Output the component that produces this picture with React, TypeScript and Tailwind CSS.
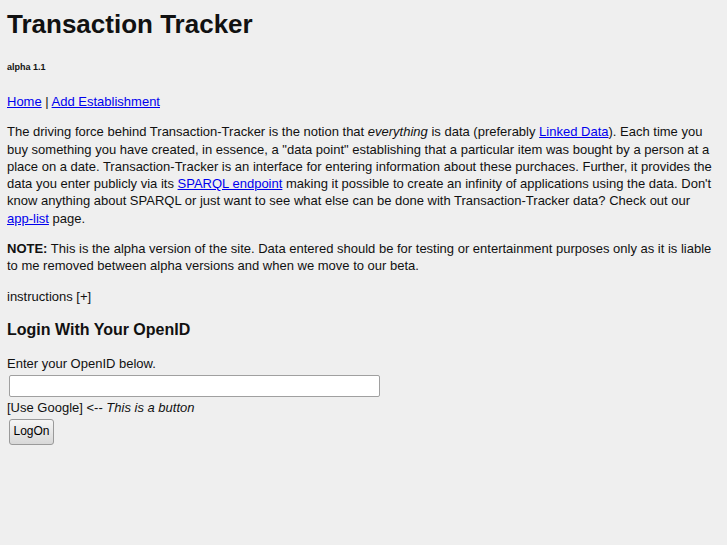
import React from "react";

export default function App() {
  return (
    <div className="min-h-screen bg-[#efefef] pl-[7px] pr-2 pt-[7px] font-['Liberation_Sans',Arial,sans-serif] text-[13px] leading-[17.3px] text-[#111]">
      <h1 className="text-[26px] leading-[34px] font-bold">Transaction Tracker</h1>
      <h6 className="mt-[20px] text-[9px] leading-[12px] font-bold">alpha 1.1</h6>
      <p className="mt-[20px]">
        <a href="#" className="text-[#0000ee] underline">Home</a> |{" "}
        <a href="#" className="text-[#0000ee] underline">Add Establishment</a>
      </p>
      <p className="mt-[13px]">
        The driving force behind Transaction-Tracker is the notion that <em>everything</em> is data (preferably{" "}
        <a href="#" className="text-[#0000ee] underline">Linked Data</a>). Each time you buy something you have
        created, in essence, a "data point" establishing that a particular item was bought by a person at a place
        on a date. Transaction-Tracker is an interface for entering information about these purchaces. Further, it
        provides the data you enter publicly via its{" "}
        <a href="#" className="text-[#0000ee] underline">SPARQL endpoint</a> making it possible to create an
        infinity of applications using the data. Don't know anything about SPARQL or just want to see what else can
        be done with Transaction-Tracker data? Check out our{" "}
        <a href="#" className="text-[#0000ee] underline">app-list</a> page.
      </p>
      <p className="mt-[13px]">
        <strong>NOTE:</strong> This is the alpha version of the site. Data entered should be for testing or
        entertainment purposes only as it is liable to me removed between alpha versions and when we move to our
        beta.
      </p>
      <p className="mt-[13px]">instructions [+]</p>
      <h3 className="mt-[15px] text-[16px] leading-[20px] font-bold">Login With Your OpenID</h3>
      <form className="mt-[15px]" onSubmit={(e) => e.preventDefault()}>
        <p>Enter your OpenID below.</p>
        <input
          type="text"
          className="ml-[2px] mt-[3px] mb-[2px] block h-[22px] w-[371px] rounded-[2px] border border-[#a0a0a0] bg-white px-1 text-[13px] outline-none"
        />
        <p>
          [Use Google] &lt;-- <em>This is a button</em>
        </p>
        <button
          type="submit"
          className="ml-[2px] mt-[2px] h-[26px] w-[45px] rounded-[3px] border border-[#9a9a9a] bg-gradient-to-b from-[#f6f6f6] to-[#d8d8d8] text-[12px] text-black"
        >
          LogOn
        </button>
      </form>
    </div>
  );
}
